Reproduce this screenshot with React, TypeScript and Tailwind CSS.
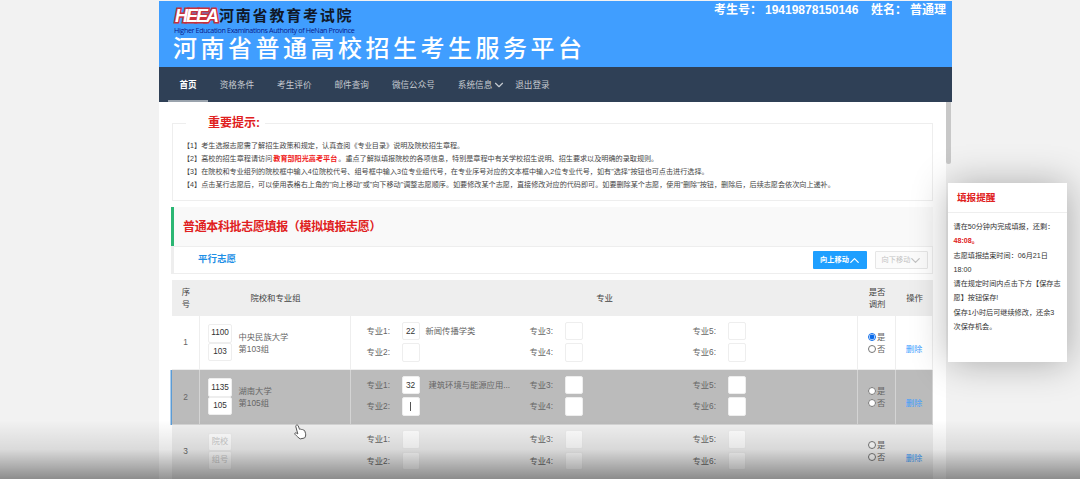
import React from 'react';
import { ChevronDown, ChevronUp } from 'lucide-react';
import { clsx } from 'clsx';

type Major = { code: string; name?: string; active?: boolean };

type Volunteer = {
  school?: string;
  schoolName?: string;
  group?: string;
  groupName?: string;
  majors: Major[];
  adjust?: boolean;
};

const EMPTY: Major = { code: '' };

const MENU = [
  '首页',
  '资格条件',
  '考生评价',
  '邮件查询',
  '微信公众号',
  '系统信息',
  '退出登录',
];

const VOLUNTEERS: Volunteer[] = [
  {
    school: '1100',
    schoolName: '中央民族大学',
    group: '103',
    groupName: '第103组',
    majors: [{ code: '22', name: '新闻传播学类' }, EMPTY, EMPTY, EMPTY, EMPTY, EMPTY],
    adjust: true,
  },
  {
    school: '1135',
    schoolName: '湖南大学',
    group: '105',
    groupName: '第105组',
    majors: [
      { code: '32', name: '建筑环境与能源应用...' },
      { code: '', active: true },
      EMPTY,
      EMPTY,
      EMPTY,
      EMPTY,
    ],
  },
  { majors: [EMPTY, EMPTY, EMPTY, EMPTY, EMPTY, EMPTY] },
];

const COLUMNS = 'grid grid-cols-[28px_151px_507px_38px_37px]';

function Header() {
  return (
    <div className="flex h-[66px] justify-between bg-[#409eff]">
      <div className="pl-[14px] whitespace-nowrap">
        <div className="flex h-[24px] items-center pt-[5px]">
          <span className="w-[44px] pl-[2px] font-['Liberation_Sans_Narrow','Liberation_Sans'] text-[18px] leading-[20px] font-bold tracking-[-2px] text-white italic [-webkit-text-stroke:3px_#c8303a] [paint-order:stroke_fill]">
            HEEA
          </span>
          <span className="pl-[2px] text-[15px] leading-[20px] font-bold tracking-[1.8px] text-[#101828]">
            河南省教育考试院
          </span>
        </div>
        <div className="pl-[1px] font-['Open_Sans'] text-[7.2px] leading-[10px] tracking-[-0.38px] text-[#0a1a8a]">
          Higher Education Examinations Authority of HeNan Province
        </div>
        <div className="text-[24px] leading-[28px] font-medium tracking-[3.5px] text-white">
          河南省普通高校招生考生服务平台
        </div>
      </div>
      <div className="flex pr-[6px] text-[12px] leading-[18px] font-bold whitespace-nowrap text-white">
        <span className="w-[51px]">考生号：</span>
        <span className="w-[106px]">19419878150146</span>
        <span className="w-[39px]">姓名：</span>
        <span>普通理</span>
      </div>
    </div>
  );
}

function Nav() {
  return (
    <div className="flex h-[35px] bg-[#2f4056] pl-[9px] text-[8.6px] leading-[37px] whitespace-nowrap text-[#c5cad0]">
      {MENU.map((item, index) => (
        <div
          className={clsx(
            'relative px-[11.5px]',
            index === 0 && 'border-b-2 border-[#9aa3ad] font-bold text-white'
          )}
          key={item}
        >
          {item}
          {item === '系统信息' && (
            <ChevronDown className="absolute top-[11px] -right-[2px] h-[14px] w-[14px]" />
          )}
        </div>
      ))}
    </div>
  );
}

function Tips() {
  return (
    <fieldset className="mx-[13px] mt-[13px] h-[86px] border border-[#eee] pl-[10px] text-[7.12px] leading-[13px] whitespace-nowrap text-[#444]">
      <legend className="ml-[3px] h-[16px] w-[79px] pl-[22px] text-[12px] leading-[17px] font-bold text-[#e02020]">
        重要提示:
      </legend>
      <div className="pt-[8.5px]">
        <p>【1】考生选报志愿需了解招生政策和规定，认真查阅《专业目录》说明及院校招生章程。</p>
        <p>
          【2】高校的招生章程请访问
          <b className="px-[1px] text-[#f02020]">教育部阳光高考平台</b>
          。重点了解拟填报院校的各项信息，特别是章程中有关学校招生说明、招生要求以及明确的录取规则。
        </p>
        <p>
          【3】在院校和专业组列的院校框中输入4位院校代号、组号框中输入3位专业组代号，在专业序号对应的文本框中输入2位专业代号，如有"选择"按钮也可点击进行选择。
        </p>
        <p>
          【4】点击某行志愿后，可以使用表格右上角的"向上移动"或"向下移动"调整志愿顺序。如要修改某个志愿，直接修改对应的代码即可。如要删除某个志愿，使用"删除"按钮，删除后，后续志愿会依次向上递补。
        </p>
      </div>
    </fieldset>
  );
}

function CodeBox({ value, hint }: { value?: string; hint: string }) {
  return (
    <div
      className={clsx(
        'flex h-[18.5px] w-[24px] items-center justify-center rounded-[2px] border border-[#eee] bg-white text-[8.2px]',
        value ? 'text-[#333]' : 'text-[#ccc]'
      )}
    >
      {value || hint}
    </div>
  );
}

function MajorField({ major, index }: { major: Major; index: number }) {
  return (
    <div className="flex h-[21.5px] items-center">
      <span className="w-[35px]">专业{index + 1}:</span>
      <span className="flex h-[18.5px] w-[18px] shrink-0 items-center justify-center rounded-[2px] border border-[#eee] bg-white text-[#333]">
        {major.active ? <i className="h-[9px] w-px bg-[#555]" /> : major.code}
      </span>
      {major.name && (
        <span className={clsx('whitespace-nowrap', major.name.length > 8 ? 'pl-[9px]' : 'pl-[6px]')}>
          {major.name}
        </span>
      )}
    </div>
  );
}

function Row({ item, index }: { item: Volunteer; index: number }) {
  const selected = index === 1;
  const cell = clsx(
    'border-r border-b',
    selected ? 'border-[#d4d4d4]' : index === 2 ? 'border-transparent' : 'border-[#eee]'
  );
  return (
    <div
      className={clsx(
        COLUMNS,
        'h-[54.3px] text-[8.3px] text-[#666]',
        selected && 'bg-[#bbb] shadow-[-1.5px_0_0_#5b9bd5]',
        index === 2 && 'bg-[#f0f0f0]'
      )}
    >
      <div className={clsx(cell, 'flex items-center justify-center')}>{index + 1}</div>
      <div className={clsx(cell, 'flex items-center pl-[8px]')}>
        <div>
          <CodeBox value={item.school} hint="院校" />
          <CodeBox value={item.group} hint="组号" />
        </div>
        <div className="pl-[6.5px] leading-[12px]">
          <p>{item.schoolName}</p>
          <p>{item.groupName}</p>
        </div>
      </div>
      <div className={clsx(cell, 'grid grid-flow-col grid-cols-[163px_163px_163px] grid-rows-[21.5px_21.5px] pt-[4px] pl-[15.5px]')}>
        {item.majors.map((major, i) => (
          <MajorField major={major} index={i} key={i} />
        ))}
      </div>
      <div className={clsx(cell, 'flex flex-col justify-center pl-[10px] leading-[12px]')}>
        {['是', '否'].map((label) => (
          <label className="flex items-center gap-[1px]" key={label}>
            <input
              type="radio"
              name={`adjust-${index}`}
              className="h-[8px] w-[8px] accent-[#0b6bea]"
              defaultChecked={item.adjust && label === '是'}
            />
            {label}
          </label>
        ))}
      </div>
      <div className={clsx(cell, 'pt-[27px] text-center leading-[12px] text-[#409eff]')}>删除</div>
    </div>
  );
}

function Reminder() {
  return (
    <div className="absolute top-[183px] left-[948px] h-[179px] w-[119px] bg-white whitespace-nowrap shadow-[1px_1px_35px_rgba(0,0,0,0.3)]">
      <div className="h-[30px] border-b border-[#eee] pl-[9px] text-[9.6px] leading-[29px] font-bold text-[#e02020]">
        填报提醒
      </div>
      <div className="pt-[7px] pl-[5.5px] text-[7.15px] leading-[14.25px] text-[#333]">
        <p>请在50分钟内完成填报，还剩：</p>
        <p className="font-bold text-[#e02020]">48:08。</p>
        <p>志愿填报结束时间：06月21日</p>
        <p>18:00</p>
        <p>请在规定时间内点击下方【保存志</p>
        <p>愿】按钮保存!</p>
        <p>保存1小时后可继续修改，还余3</p>
        <p>次保存机会。</p>
      </div>
    </div>
  );
}

function App() {
  return (
    <div className="relative h-[479px] w-[1080px] overflow-hidden bg-[#f2f2f2] pt-px font-['Liberation_Sans','Noto_Sans_CJK_SC',sans-serif]">
      <div className="ml-[159px] w-[793px]">
        <Header />
        <Nav />
        <div className="flex">
          <div className="h-[400px] w-[787px] bg-white">
            <Tips />
            <div className="mt-[6px] mr-[13px] ml-[12px] h-[39px] border-l-3 border-[#2bb673] bg-[#f9f9f9] pl-[9px] text-[12px] leading-[40px] font-bold tracking-[-0.35px] text-[#e02020]">
              普通本科批志愿填报（模拟填报志愿）
            </div>
            <div className="mr-[13px] ml-[12px] flex h-[28px] items-center border border-l-3 border-[#eee] pr-[4px] pl-[24px] text-[7.2px]">
              <span className="flex-1 pb-[1px] text-[9.5px] font-bold text-[#1e8fe6]">平行志愿</span>
              <button className="mr-[8px] flex h-[18px] w-[54px] items-center justify-center rounded-[1px] bg-[#1e9fff] font-bold text-white">
                向上移动
                <ChevronUp className="-mx-[2px] h-[15px] w-[15px]" />
              </button>
              <button className="flex h-[18px] w-[53px] items-center justify-center rounded-[1px] border border-[#e6e6e6] bg-[#fbfbfb] text-[#c2c2c2]">
                向下移动
                <ChevronDown className="-mx-[2px] h-[15px] w-[15px]" />
              </button>
            </div>
            <div className="mt-[6px] ml-[13px] w-[761px]">
              <div className={clsx(COLUMNS, 'h-[36px] items-center bg-[#eee] text-center text-[8.4px] leading-[12px] text-[#444]')}>
                <div>序<br />号</div>
                <div>院校和专业组</div>
                <div>专业</div>
                <div>是否<br />调剂</div>
                <div>操作</div>
              </div>
              {VOLUNTEERS.map((item, index) => (
                <Row item={item} index={index} key={index} />
              ))}
            </div>
          </div>
          <div className="h-[62px] w-[5px] rounded-b-[3px] bg-[#c8c8c8]" />
        </div>
      </div>

      <Reminder />

      {/* fade at the bottom of the player */}
      <div className="absolute inset-x-0 bottom-0 h-[59px] bg-linear-to-b from-black/0 via-black/10 to-black/42" />

      <svg
        className="absolute top-[424px] left-[294px] h-[16px] w-[13px]"
        viewBox="0 0 13 16"
        fill="white"
        stroke="#555"
        strokeWidth="1"
        strokeLinejoin="round"
      >
        <path d="M2.400 1.200c.9-.4 1.600 0 1.900.8l1.200 3.300c.6-.4 1.300-.3 1.700.3.7-.4 1.400-.2 1.800.5.8-.2 1.500.1 1.800.9l.8 2.700c.3 1.700-.1 3.200-1.100 4.300l-4.300.9C4.600 13.900 3 12.300 1 10.300c-.7-.9.200-1.900 1.300-1.300l1.500.9L1.800 2.600c-.2-.7 0-1.200.6-1.400z" />
      </svg>
    </div>
  );
}

export default App;
